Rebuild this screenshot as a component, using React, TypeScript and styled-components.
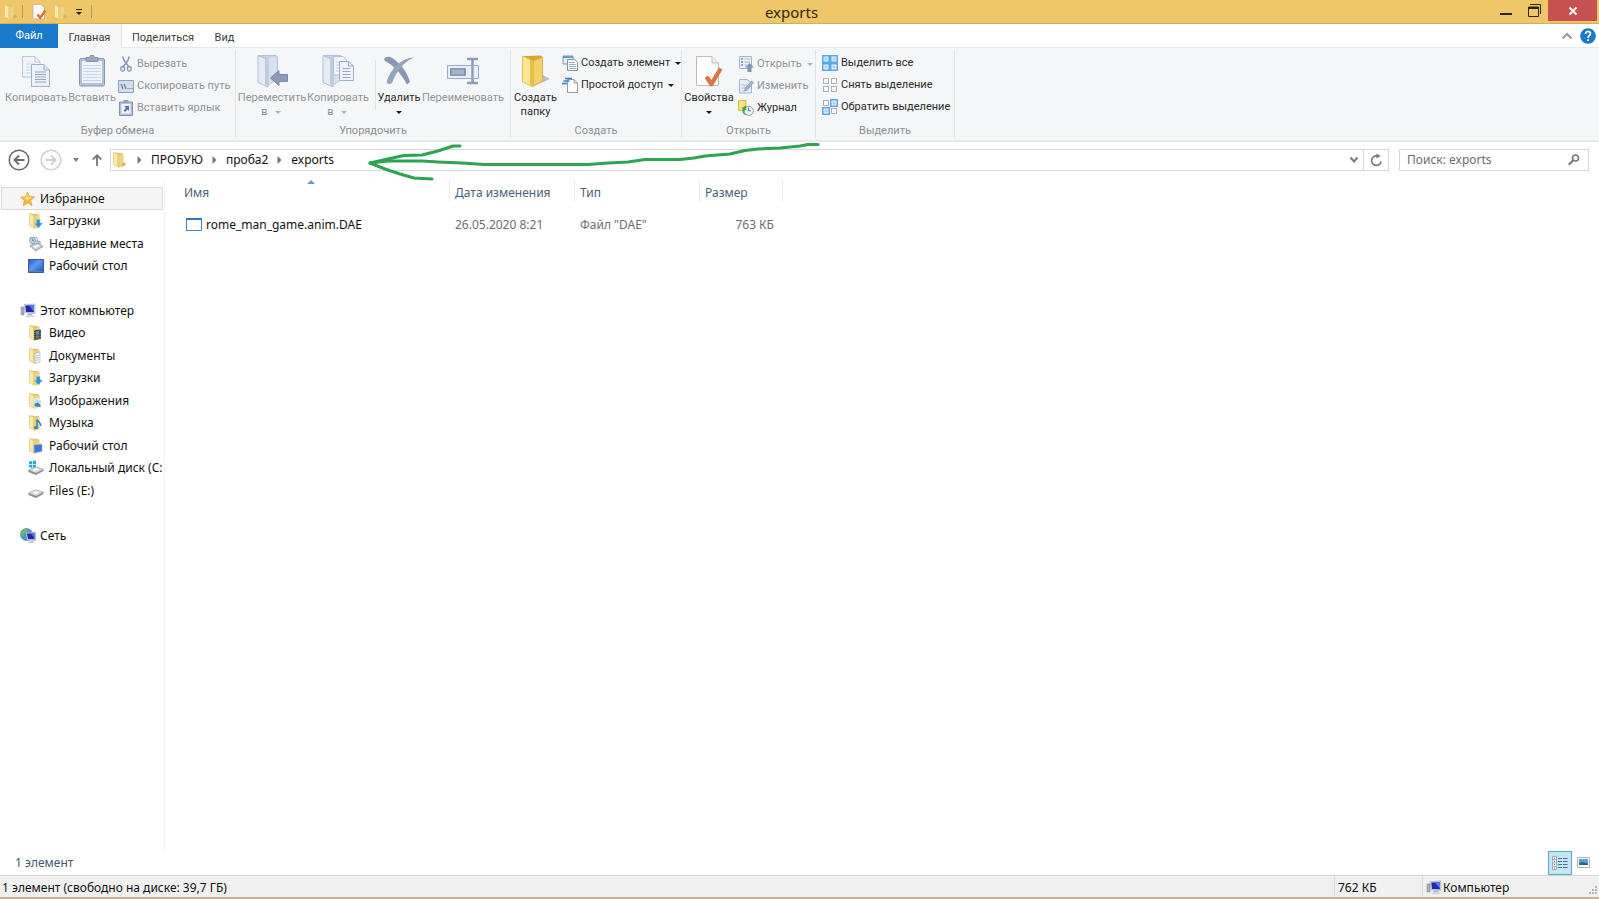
import React from "react";
import styled, { createGlobalStyle } from "styled-components";

const GlobalStyle = createGlobalStyle`
  *, *::before, *::after { box-sizing: border-box; }
  html, body { margin: 0; padding: 0; }
  body {
    background: #fff;
    color: #111;
    font: 12px/14px "Noto Sans", "Open Sans", sans-serif;
    overflow: hidden;
  }
  button, input { font: inherit; color: inherit; margin: 0; }
  svg { display: block; flex: none; overflow: visible; }
`;

const Window = styled.div`
  position: relative;
  display: flex;
  flex-direction: column;
  height: 100vh;
  min-width: 1000px;
`;

const PlainButton = styled.button`
  display: flex;
  align-items: center;
  padding: 0;
  border: 0;
  background: none;
  white-space: nowrap;
`;

/* ---------- title bar ---------- */

const TitleBar = styled.header`
  display: grid;
  grid-template-columns: 1fr auto 1fr;
  height: 24px;
  padding-right: 2px;
  background: #efc768;
  border-bottom: 1px solid #cfae62;
`;

const QuickAccess = styled.div`
  display: flex;
  align-items: center;
`;

const QuickButton = styled(PlainButton)<{ $width: number }>`
  justify-content: center;
  width: ${(p) => p.$width}px;
  height: 20px;
`;

const QuickDivider = styled.span`
  width: 1px;
  height: 13px;
  background: #b39a62;
`;

const Title = styled.h1`
  margin: 0;
  padding: 2px 14px 0 0;
  font-size: 15px;
  line-height: 20px;
  font-weight: 400;
  color: #33270c;
`;

const WindowButtons = styled.div`
  display: flex;
  justify-content: flex-end;
  align-items: flex-start;
`;

const CaptionButton = styled(PlainButton)<{ $close?: boolean }>`
  justify-content: center;
  width: ${(p) => (p.$close ? 49 : 28)}px;
  height: 21px;
  background: ${(p) => (p.$close ? "#c75050" : "none")};
`;

/* ---------- tabs ---------- */

const TabBar = styled.nav`
  display: flex;
  height: 24px;
  border-bottom: 1px solid #e6e7e8;
`;

const Tab = styled(PlainButton)<{ $kind?: "file" | "active"; $width: number }>`
  justify-content: center;
  width: ${(p) => p.$width}px;
  height: 24px;
  font-family: Roboto, "Noto Sans", sans-serif;
  font-size: 11px;
  color: ${(p) => (p.$kind === "file" ? "#fff" : "#3b3b3b")};
  background: ${(p) =>
    p.$kind === "file" ? "#1979ca" : p.$kind === "active" ? "#f5f6f7" : "none"};
  border-right: ${(p) => (p.$kind === "active" ? "1px solid #e2e3e4" : "0")};
  padding-top: ${(p) => (p.$kind === "file" ? 0 : 4)}px;
`;

const TabTools = styled.div`
  display: flex;
  align-items: center;
  gap: 8px;
  margin-left: auto;
  padding-right: 3px;
`;

/* ---------- ribbon ---------- */

const Ribbon = styled.section`
  display: flex;
  height: 94px;
  font-family: Roboto, "Noto Sans", sans-serif;
  background: #f5f6f7;
  border-bottom: 2px solid #e8e8e9;
`;

const Group = styled.div<{ $width: number }>`
  display: flex;
  flex-direction: column;
  flex: none;
  width: ${(p) => p.$width}px;
  margin: 2px 0;
  border-right: 1px solid #e3e4e6;
`;

const GroupBody = styled.div`
  display: flex;
  flex: 1;
  padding: 2px 2px 0;
`;

const GroupLabel = styled.div`
  height: 14px;
  font-size: 11px;
  line-height: 14px;
  text-align: center;
  color: #8b8f94;
`;

const BigButton = styled(PlainButton)<{ $width: number; $dim?: boolean }>`
  flex: none;
  flex-direction: column;
  width: ${(p) => p.$width}px;
  height: 67px;
  font-size: 11px;
  color: ${(p) => (p.$dim ? "#919498" : "#2b2b2b")};
`;

const BigIcon = styled.span`
  display: flex;
  align-items: center;
  justify-content: center;
  height: 39px;
  padding-bottom: 2px;
`;

const LabelLine = styled.span`
  display: flex;
  align-items: center;
  gap: 5px;
  height: 14px;
`;

const InnerDivider = styled.span`
  width: 1px;
  height: 50px;
  margin: 8px 3px 0 5px;
  background: #e3e4e6;
`;

const SmallColumn = styled.div<{ $top: number; $left: number }>`
  display: flex;
  flex-direction: column;
  align-items: flex-start;
  padding: ${(p) => p.$top}px 0 0 ${(p) => p.$left}px;
`;

const SmallButton = styled(PlainButton)<{ $dim?: boolean }>`
  gap: 3px;
  height: 22px;
  font-size: 11px;
  color: ${(p) => (p.$dim ? "#919498" : "#2b2b2b")};
`;

const SmallIcon = styled.span`
  display: flex;
  justify-content: center;
  width: 16px;
`;

const Caret = styled.span<{ $dim?: boolean }>`
  width: 0;
  height: 0;
  margin: 0 2px;
  border: 3px solid transparent;
  border-top: 3px solid ${(p) => (p.$dim ? "#b0b3b6" : "#1c1c1c")};
  border-bottom: 0;
`;

/* ---------- address row ---------- */

const AddressRow = styled.div`
  display: flex;
  align-items: center;
  height: 37px;
  padding: 0 10px 1px 8px;
`;

const NavButton = styled(PlainButton)<{ $width: number }>`
  justify-content: center;
  width: ${(p) => p.$width}px;
`;

const AddressBox = styled.div`
  display: flex;
  align-items: center;
  flex: 1;
  height: 22px;
  border: 1px solid #d9d9d9;
`;

const Crumbs = styled.nav`
  display: flex;
  align-items: center;
  flex: 1;
  gap: 9px;
  padding-left: 1px;
`;

const RefreshButton = styled(PlainButton)`
  justify-content: center;
  width: 25px;
  height: 20px;
  border-left: 1px solid #d9d9d9;
`;

const SearchBox = styled.label`
  display: flex;
  align-items: center;
  width: 190px;
  height: 22px;
  margin-left: 10px;
  padding: 0 8px 0 7px;
  border: 1px solid #d9d9d9;
`;

const SearchInput = styled.input`
  flex: 1;
  min-width: 0;
  padding: 0;
  border: 0;
  outline: 0;
  background: none;
  &::placeholder { color: #6d6d6d; opacity: 1; }
`;

/* ---------- body ---------- */

const Body = styled.main`
  display: flex;
  flex: 1;
  min-height: 0;
`;

const Sidebar = styled.aside`
  display: flex;
  flex-direction: column;
  gap: 22px;
  width: 165px;
  padding: 8px 1px 0 1px;
  border-right: 1px solid #f3f3f3;
`;

const TreeGroup = styled.ul`
  margin: 0;
  padding: 0;
  list-style: none;
`;

const TreeItem = styled.li`
  display: flex;
  height: 22px;
  &:nth-child(odd) { height: 23px; }
`;

const TreeButton = styled(PlainButton)<{ $child?: boolean; $active?: boolean }>`
  flex: 1;
  gap: ${(p) => (p.$child ? 5 : 4)}px;
  min-width: 0;
  overflow: hidden;
  padding-left: ${(p) => (p.$child ? 26 : 18)}px;
  border: 1px solid ${(p) => (p.$active ? "#dadada" : "transparent")};
  border-right-width: ${(p) => (p.$active ? 1 : 0)}px;
  background: ${(p) => (p.$active ? "#f5f5f5" : "none")};
`;

const Files = styled.section`
  flex: 1;
  padding-top: 1px;
`;

const FileTable = styled.table`
  table-layout: fixed;
  width: 618px;
  border-collapse: separate;
  border-spacing: 0;
`;

const HeadCell = styled.th<{ $width: number }>`
  position: relative;
  width: ${(p) => p.$width}px;
  height: 22px;
  padding: 4px 0 0 ${(p) => (p.$width > 200 ? 19 : 5)}px;
  text-align: left;
  font-weight: 400;
  color: #4c607a;
  border-right: 1px solid #ebebeb;
`;

const SortMark = styled.span`
  position: absolute;
  top: 0;
  left: 50%;
  border: 4px solid transparent;
  border-bottom-color: #6a9cb8;
  border-top: 0;
`;

const Cell = styled.td<{ $end?: boolean }>`
  height: 46px;
  padding: 0 ${(p) => (p.$end ? 9 : 0)}px 0 5px;
  color: #6d6d6d;
  text-align: ${(p) => (p.$end ? "right" : "left")};
`;

const NameCell = styled(Cell)`
  padding-left: 21px;
  color: #111;
`;

const FileName = styled.span`
  display: flex;
  align-items: center;
  gap: 4px;
`;

/* ---------- bottom bars ---------- */

const DetailsBar = styled.div`
  display: flex;
  align-items: center;
  height: 24px;
  padding: 0 4px 0 15px;
  color: #44566e;
`;

const ViewButtons = styled.div`
  display: flex;
  margin-left: auto;
`;

const ViewButton = styled(PlainButton)<{ $active?: boolean }>`
  justify-content: center;
  width: 24px;
  height: 24px;
  margin-left: ${(p) => (p.$active ? 0 : -1)}px;
  border: 1px solid ${(p) => (p.$active ? "#5ba7cc" : "transparent")};
  background: ${(p) => (p.$active ? "#c4e7f7" : "none")};
`;

const StatusBar = styled.footer`
  display: flex;
  height: 24px;
  background: #f0f0f0;
  border-top: 1px solid #d7d7d7;
  border-bottom: 2px solid #c3b694;
`;

const StatusPane = styled.div<{ $width?: number }>`
  display: flex;
  align-items: center;
  gap: 1px;
  flex: ${(p) => (p.$width ? "none" : "1")};
  width: ${(p) => (p.$width ? p.$width + "px" : "auto")};
  padding-left: ${(p) => (p.$width ? 3 : 2)}px;
  padding-top: 3px;
  border-left: ${(p) => (p.$width ? "1px solid #dadada" : "0")};
`;

const Grip = styled.span`
  margin: 4px 1px 0 auto;
`;

const Annotation = styled.svg`
  position: absolute;
  left: 365px;
  top: 140px;
  pointer-events: none;
`;

/* ---------- icons ---------- */

type FolderKind = "plain" | "download" | "video" | "docs" | "image" | "music" | "desktop";

const FolderIcon = ({ kind = "plain" }: { kind?: FolderKind }) => (
  <svg width="16" height="16" viewBox="0 0 16 16">
    <path d="m2 .500 8 .5 1.500 1V14l-5 1.500z" fill="#e3c46e" />
    <path d="M7 3.500 11 2v11.500l-4 2z" fill="#efd583" />
    <path d="m1.500.500 5.500 2.500v12.500L1.500 13z" fill="#faeaae" stroke="#e2c56c" strokeWidth=".7" />
    <path d="m5 2.500 2 .8v12L5 14.300z" fill="#ecd07c" />
    {kind === "plain" && <path d="m10.500 11 2.500-.5 1 2.500-4 1.800z" fill="#cbb57a" />}
    {kind === "download" && (
      <path d="M8.500 6.500H12V10h2.500L10.500 15 6.500 10.500h2z" fill="#2e93cf" stroke="#8cc6e6" strokeWidth=".6" />
    )}
    {kind === "video" && (
      <>
        <path d="m6 5 7-.5v9.500l-7 1z" fill="#3d4a4c" />
        <path d="M8 6h3v3.500H8z" fill="#5f92a8" />
        <path d="M8 10.300h3v3H8z" fill="#68805a" />
        <path d="M6.800 5v9.500M12.200 5v9" stroke="#c7cdd0" strokeWidth=".6" strokeDasharray="1 1" />
      </>
    )}
    {kind === "docs" && (
      <>
        <path d="M7 5.500 12 4v10l-5 1.500z" fill="#f3f5f8" stroke="#a9b0ba" strokeWidth=".6" />
        <path d="m8.300 8 2.500-.8m-2.500 3 2.500-.8m-2.500 3 2.500-.8" stroke="#98a2b3" strokeWidth=".7" />
      </>
    )}
    {kind === "image" && (
      <>
        <path d="m6 5.500 7 1v8l-7-1z" fill="#b9def0" stroke="#f2f6f8" strokeWidth=".8" />
        <path d="m6.500 11 3-1.500 3 2.500v2l-6-.8z" fill="#47809b" />
      </>
    )}
    {kind === "music" && (
      <>
        <path d="M9 12.500V4.500c1 2.500 4.500 3 3.500 6.500" fill="none" stroke="#2d86c2" strokeWidth="1.600" />
        <ellipse cx="8" cy="12.600" rx="2.200" ry="1.700" fill="#2d86c2" />
      </>
    )}
    {kind === "desktop" && (
      <path d="m6 7 8-1v7.500L6 15z" fill="#3c79d6" stroke="#9fc0ef" strokeWidth=".6" />
    )}
  </svg>
);

const StarIcon = () => (
  <svg width="16" height="16" viewBox="0 0 16 16">
    <path d="m7.500 1 2 4.600 5 .3-3.900 3.400 1.400 5.200-4.400-2.700-4.500 2.900 1.300-5.300L.7 6.200l4.900-.5z" fill="#fbb73c" stroke="#e99a2c" strokeWidth=".7" />
    <path d="m7.500 2.500 1.300 3.800 3.700.2-4.900 2.800-4.400-2.500 3-.5z" fill="#fedd85" />
  </svg>
);

const RecentIcon = () => (
  <svg width="16" height="16" viewBox="0 0 16 16">
    <path d="M2 1.500h7l1.500 6H4z" fill="#dfe9f2" stroke="#8aa5bb" strokeWidth=".7" />
    <circle cx="4.500" cy="4.500" r="3" fill="#bcd8ea" stroke="#6f95b1" strokeWidth=".8" />
    <path d="M4.500 3v1.700H6" fill="none" stroke="#3e6484" strokeWidth=".7" />
    <path d="m2 9.500 8-2.500 5 3.500-7.500 4.500z" fill="#c3cbd2" stroke="#7c8a96" strokeWidth=".7" />
    <path d="m5 10 5-1.500 2 1.500-5 2.300z" fill="#f4f7f9" />
    <path d="m8 5 4 .5v3" fill="none" stroke="#8296a6" />
  </svg>
);

const DesktopIcon = () => (
  <svg width="16" height="14" viewBox="0 0 16 14">
    <defs>
      <linearGradient id="screen" x1="0" y1="0" x2="1" y2="1">
        <stop offset="0" stopColor="#2a58bd" />
        <stop offset=".45" stopColor="#5b9af0" />
        <stop offset="1" stopColor="#1e4db6" />
      </linearGradient>
    </defs>
    <path d="M.5.500h15v13H.5z" fill="url(#screen)" stroke="#385c9f" />
    <path d="M1 12h14v1H1z" fill="#5b7dae" />
  </svg>
);

const ComputerIcon = () => (
  <svg width="16" height="16" viewBox="0 0 16 16">
    <path d="M1 4h3v8H1z" fill="#a5adb7" stroke="#7c8490" strokeWidth=".5" />
    <path d="m4 1.500 11-.5v9.500l-10-.5z" fill="#d5dce5" stroke="#9aa5b4" strokeWidth=".6" />
    <path d="m5.300 2.500 8.700-.3v7l-8-.3z" fill="#1c28b4" />
    <path d="m9 2.400 5-.2v6.500z" fill="#5a78e4" />
    <path d="m8 10.500 4 .2.500 1.800H7z" fill="#aeb6c1" />
    <path d="m5 13 9-.5 1.500 1.300-9 .8z" fill="#d3d7dc" />
  </svg>
);

const NetworkIcon = () => (
  <svg width="16" height="16" viewBox="0 0 16 16">
    <circle cx="6.500" cy="6.500" r="6" fill="#4c94cc" stroke="#3f76a2" strokeWidth=".6" />
    <path d="M2 3c2-2 4-2.500 6-2L7 4 4 5.500 3.500 9 1 7.500z" fill="#6dba6d" />
    <path d="m6 4.500 9.500-.3v8.300L7 12z" fill="#d5dce5" stroke="#8f9bac" strokeWidth=".6" />
    <path d="m7 5.500 7.500-.2v6L8 11z" fill="#1c28b4" />
    <path d="m11 5.400 3.500-.1v5.200z" fill="#5a78e4" />
    <path d="m8 13.500 5-.3 1.500 1.600-6 .4z" fill="#bfc5cd" />
  </svg>
);

const DriveIcon = ({ system }: { system?: boolean }) => (
  <svg width="16" height="16" viewBox="0 0 16 16">
    {system && (
      <path d="m1 1.500 3-.5v3H1zm3.700-.6L8 .4V4H4.700zM1 4.700h3v3l-3-.4zm3.700 0H8v3.600l-3.300-.5z" fill="#1fb0e0" />
    )}
    <path d="M.5 10 8 6.800l7.500 2.400-7.500 4z" fill="#dcdfe1" stroke="#94989c" strokeWidth=".6" />
    <path d="M.5 10 8 13.200l7.500-4v1.800L8 15 .5 12z" fill="#888e93" />
    <path d="m4.500 9.700 3.500-1.400 3 1-3.300 1.700z" fill="#fafafa" />
    {system && <path d="m2 12 2.500 1" stroke="#46c36b" />}
  </svg>
);

const PropertiesSmallIcon = () => (
  <svg width="15" height="16" viewBox="0 0 15 16">
    <path d="M1 .500h8l3.500 3.500v11H1z" fill="#fcf7ef" stroke="#c2b69e" strokeWidth=".8" />
    <path d="m5.500 10.500 2.700 3.300L13.500 6.500" fill="none" stroke="#dc6a3c" strokeWidth="2.300" />
  </svg>
);

const CopyIcon = () => (
  <svg width="30" height="34" viewBox="0 0 30 34">
    <path d="M1.500 2.500H14l5 5V23H1.500z" fill="#f1f5fa" stroke="#b9c8dc" />
    <path d="M14 2.500V8h5" fill="none" stroke="#b9c8dc" />
    <path d="M5 10h9m-9 3h9m-9 3h9m-9 3h9" stroke="#c8d4e4" />
    <path d="M10.500 10.500H23l5.500 5.500v16.500h-18z" fill="#edf2f9" stroke="#9fb1ca" />
    <path d="M23 10.500V16h5.500" fill="#dbe4f0" stroke="#9fb1ca" />
    <path d="M14 18h11M14 20.500h11M14 23h11M14 25.500h11M14 28h11" stroke="#91a5c1" />
  </svg>
);

const PasteIcon = () => (
  <svg width="28" height="34" viewBox="0 0 28 34">
    <rect x="1.500" y="4.500" width="25" height="27.500" rx="1.500" fill="#b4c2d6" stroke="#8496b3" />
    <path d="M4 7h20v22H4z" fill="#f0f4f9" />
    <path d="M5 11.500h18M5 14.500h18M5 17.500h18M5 20.500h18M5 23.500h18M5 26.500h18" stroke="#cad5e3" />
    <path d="M8 3.500h3.500L12.500 1.500h3l1 2H20v4H8z" fill="#9aaac3" stroke="#8395b1" />
  </svg>
);

const PaleFolder = () => (
  <>
    <path d="M3 1.500h17l1.500 1.500v22L12 31z" fill="#c8d4e6" stroke="#b4c2d8" />
    <path d="M12 4.500 21 3v21.500L12 31z" fill="#d6e0ee" />
    <path d="M2 1.500 12 5.500v27.500L2 28.500z" fill="#e4ebf5" stroke="#b0bfd6" />
    <path d="m9 5 3 1v26l-3-1.500z" fill="#bfcce0" />
  </>
);

const MoveToIcon = () => (
  <svg width="32" height="34" viewBox="0 0 32 34">
    <PaleFolder />
    <path d="m14.500 24 8.500-7.500v4h8.500v7H23v4z" fill="#8c9cb8" stroke="#7788a6" />
  </svg>
);

const CopyToIcon = () => (
  <svg width="34" height="34" viewBox="0 0 34 34">
    <PaleFolder />
    <path d="M12.500 2.500H22l3.500 3.500v15h-13z" fill="#f1f5fa" stroke="#b0c0d8" />
    <path d="M15 8h8m-8 3h8m-8 3h8m-8 3h8" stroke="#c3d0e2" />
    <path d="M18.500 7.500h9L32.500 12v14.500h-14z" fill="#eff3f9" stroke="#9fb1ca" />
    <path d="M27.500 7.500V12h5M21.500 14.500h8m-8 3h8m-8 3h8m-8 3h8" fill="none" stroke="#95a8c4" />
  </svg>
);

const DeleteIcon = () => (
  <svg width="32" height="30" viewBox="0 0 32 30">
    <path d="M1 3C3 0 7 0 10 2.500c8 6 14 13 17 23.500l-3 2.500C19 19 12 10 2 5z" fill="#8798b7" />
    <path d="M31 1.500c-8 3-17 12-22 25.500-2 2-6 1-5-2C8 12 19 2 31 1.500z" fill="#94a3be" />
  </svg>
);

const RenameIcon = () => (
  <svg width="34" height="30" viewBox="0 0 34 30">
    <path d="M1.500 9.500h31v13h-31z" fill="#e9eff7" stroke="#98abc7" />
    <path d="M4 12h16v8H4z" fill="#8598b8" />
    <path d="M6 13.500h12v5H6z" fill="#a3b3cc" />
    <path d="M26.500 4v22M21 3h4.500l1 1 1-1H32M21 27h4.500l1-1 1 1H32" fill="none" stroke="#8f9fbb" strokeWidth="2.500" />
  </svg>
);

const NewFolderIcon = () => (
  <svg width="30" height="36" viewBox="0 0 30 36">
    <path d="m13 33 16-7-7-4-8 6z" fill="#a9a69d" opacity=".7" />
    <path d="m3 3 17-.5 1.500 1.500v23L12 30z" fill="#d4a62e" />
    <path d="M12 8 21.500 4v24L12 33z" fill="#f2d06a" stroke="#d3a93c" strokeWidth=".7" />
    <path d="m1.500 3 10.500 5v26L1.500 29z" fill="#f9e691" stroke="#dcb850" strokeWidth=".8" />
    <path d="m9 7 3 1.200v25L9 32z" fill="#e6bf4c" />
  </svg>
);

const PropertiesIcon = () => (
  <svg width="28" height="34" viewBox="0 0 28 34">
    <path d="M1.500 2.500H17L23.500 9v22.500h-22z" fill="#fdfdfd" stroke="#b9bbbe" />
    <path d="M17 2.500V9h6.500" fill="#eceded" stroke="#b9bbbe" />
    <path d="m10 24 3-2 3.500 4.500L24 14l3 1.500L17.500 32h-2z" fill="#e17340" stroke="#cb6032" strokeWidth=".6" />
  </svg>
);

const CutIcon = () => (
  <svg width="12" height="16" viewBox="0 0 12 16" fill="none">
    <path d="M3 .5c-.5 4 3.500 6 5.500 10M9 .5c.5 4-3.500 6-5.500 10" stroke="#8497b5" strokeWidth="1.500" />
    <ellipse cx="2.700" cy="12.800" rx="1.900" ry="2.300" stroke="#8497b5" strokeWidth="1.300" />
    <ellipse cx="9.300" cy="12.800" rx="1.900" ry="2.300" stroke="#8497b5" strokeWidth="1.300" />
  </svg>
);

const CopyPathIcon = () => (
  <svg width="16" height="13" viewBox="0 0 16 13">
    <path d="M.5.500h15v12H.5z" fill="#d3deec" stroke="#8b9fbf" />
    <path d="m3 4 2 5m1-5 2 5" stroke="#5f7598" strokeWidth="1.100" />
    <path d="M9.500 8.500h1m1 0h1m1 0h1" stroke="#5f7598" />
  </svg>
);

const PasteLinkIcon = () => (
  <svg width="14" height="16" viewBox="0 0 14 16">
    <path d="M.5 2h13v13.500H.5z" fill="#b3c2d8" stroke="#7d91b2" />
    <path d="M2.500 4h9v9.500h-9z" fill="#f3f6fa" />
    <path d="M4.500 0h5v3h-5z" fill="#8ea1bf" />
    <path d="M5 6h5v5L8.500 9.500 6 12 4.500 10.500 7 8z" fill="#5b7297" />
  </svg>
);

const NewItemIcon = () => (
  <svg width="16" height="16" viewBox="0 0 16 16">
    <path d="M1 1h10v8H1z" fill="#dfeef7" stroke="#6b9db9" />
    <path d="M1 1h10v2H1z" fill="#5ba0c5" />
    <path d="M5.500 4.500h7L15.500 7v8.500h-10z" fill="#fafafa" stroke="#8d9398" />
    <path d="M7 7.500h6m-6 2h7m-7 2h7m-7 2h7" stroke="#9cb4c2" />
  </svg>
);

const EasyAccessIcon = () => (
  <svg width="16" height="16" viewBox="0 0 16 16">
    <path d="M5.500 2.500h6.500L15.500 6v9.500h-10z" fill="#fcfcfc" stroke="#989da1" />
    <path d="M12 2.500V6h3.500" fill="none" stroke="#989da1" />
    <path d="M3 1.500h7M1.500 4h6M0 6.500h5" stroke="#3182b8" strokeWidth="1.500" />
  </svg>
);

const OpenIcon = () => (
  <svg width="15" height="16" viewBox="0 0 15 16">
    <path d="M.5.500h12v12H.5z" fill="#e9eff7" stroke="#a5b5cd" />
    <path d="M2 3h2M2 6h2M2 9h2" stroke="#7e93b5" strokeWidth="1.600" />
    <path d="M5.500 3H11M5.500 6H11M5.500 9H8" stroke="#a6b6ce" />
    <path d="m10.500 7 4.500 4.500h-2.500V16h-4v-4.500H6z" fill="#8395b4" />
  </svg>
);

const EditIcon = () => (
  <svg width="15" height="16" viewBox="0 0 15 16">
    <path d="M.5 1.500H8L12.500 5v10H.5z" fill="#e6edf6" stroke="#a5b5cd" />
    <path d="M2.500 7h6m-6 3h4m-4 3h3" stroke="#b6c4d8" />
    <path d="m5.500 13 .7-2.800L12.500 3l2 1.700-6.300 7.300z" fill="#a3b2ca" stroke="#8295b3" strokeWidth=".7" />
  </svg>
);

const HistoryIcon = () => (
  <svg width="16" height="16" viewBox="0 0 16 16">
    <path d="M.5.500h7.500v10h-7.500z" fill="#f7e283" stroke="#ddbb3f" />
    <circle cx="10.800" cy="10.800" r="4.600" fill="#eaf1f1" stroke="#8ea1a1" />
    <path d="M10.500 7.500v3.300H13" fill="none" stroke="#697d80" />
    <path d="M9.500 15c-3-.5-4-3-3-5.500l2 1L8 5.500 3.500 8l1.300.7C3.500 12 5.500 15.500 9.500 15z" fill="#3daa45" />
  </svg>
);

const SelectTiles = ({ filled }: { filled: boolean[] }) => (
  <svg width="16" height="16" viewBox="0 0 16 16">
    {filled.map((on, i) => {
      const x = (i % 2) * 8;
      const y = Math.floor(i / 2) * 8;
      return (
        <g key={i}>
          {on && <path d={`M${x} ${y}h8v8h-8z`} fill="#5ba7e8" />}
          <rect
            x={x + (on ? 2 : 1.500)}
            y={y + (on ? 2 : 1.500)}
            width={on ? 4 : 5}
            height={on ? 4 : 5}
            fill={on ? "#a9d2f5" : "#fbfbfb"}
            stroke={on ? "#e6f4ff" : "#b0b2b5"}
          />
        </g>
      );
    })}
  </svg>
);

const BackIcon = ({ forward }: { forward?: boolean }) => {
  const c = forward ? "#cfcfcf" : "#6b6b6b";
  return (
    <svg width="22" height="22" viewBox="0 0 22 22" fill="none" stroke={c}>
      <circle cx="11" cy="11" r="9.800" strokeWidth="1.500" />
      {forward ? (
        <path d="M5.500 11H15m-4-4.500 4.500 4.500-4.500 4.500" strokeWidth="2" />
      ) : (
        <path d="M16.500 11H7m4-4.500L6.500 11l4.500 4.500" strokeWidth="2" />
      )}
    </svg>
  );
};

const Chevron = ({ up }: { up?: boolean }) => (
  <svg width="10" height="8" viewBox="0 0 10 8" fill="none" stroke={up ? "#9a9a9a" : "#7a7a7a"} strokeWidth="2">
    <path d={up ? "m.5 6.500 4.500-4.500 4.500 4.500" : "m1.500 1.500 3.500 4 3.500-4"} />
  </svg>
);

const CrumbArrow = () => (
  <svg width="5" height="8" viewBox="0 0 5 8">
    <path d="M.5 0v8l4-4z" fill="#747474" />
  </svg>
);

/* ---------- data ---------- */

type Entry = { label: string; icon: React.ReactNode };

const tree: Entry[][] = [
  [
    { label: "Избранное", icon: <StarIcon /> },
    { label: "Загрузки", icon: <FolderIcon kind="download" /> },
    { label: "Недавние места", icon: <RecentIcon /> },
    { label: "Рабочий стол", icon: <DesktopIcon /> },
  ],
  [
    { label: "Этот компьютер", icon: <ComputerIcon /> },
    { label: "Видео", icon: <FolderIcon kind="video" /> },
    { label: "Документы", icon: <FolderIcon kind="docs" /> },
    { label: "Загрузки", icon: <FolderIcon kind="download" /> },
    { label: "Изображения", icon: <FolderIcon kind="image" /> },
    { label: "Музыка", icon: <FolderIcon kind="music" /> },
    { label: "Рабочий стол", icon: <FolderIcon kind="desktop" /> },
    { label: "Локальный диск (C:)", icon: <DriveIcon system /> },
    { label: "Files (E:)", icon: <DriveIcon /> },
  ],
  [{ label: "Сеть", icon: <NetworkIcon /> }],
];

type BigProps = {
  icon: React.ReactNode;
  label: string;
  second?: string;
  caret?: boolean;
  dim?: boolean;
  width: number;
};

const Big = ({ icon, label, second, caret, dim, width }: BigProps) => (
  <BigButton type="button" $width={width} $dim={dim}>
    <BigIcon>{icon}</BigIcon>
    <LabelLine>{label}</LabelLine>
    {(second || caret) && (
      <LabelLine>
        {second}
        {caret && <Caret $dim={dim} />}
      </LabelLine>
    )}
  </BigButton>
);

type SmallProps = { icon: React.ReactNode; label: string; caret?: boolean; dim?: boolean };

const Small = ({ icon, label, caret, dim }: SmallProps) => (
  <SmallButton type="button" $dim={dim}>
    <SmallIcon>{icon}</SmallIcon>
    {label}
    {caret && <Caret $dim={dim} />}
  </SmallButton>
);

export default function App() {
  return (
    <>
      <GlobalStyle />
      <Window>
        <TitleBar>
          <QuickAccess>
            <QuickButton type="button" aria-label="Меню окна" $width={22}>
              <FolderIcon />
            </QuickButton>
            <QuickDivider />
            <QuickButton type="button" aria-label="Свойства" $width={32}>
              <PropertiesSmallIcon />
            </QuickButton>
            <QuickButton type="button" aria-label="Создать папку" $width={12}>
              <FolderIcon />
            </QuickButton>
            <QuickButton type="button" aria-label="Настройка панели" $width={24}>
              <svg width="6" height="6" viewBox="0 0 6 6">
                <path d="M0 .500h6" stroke="#222" />
                <path d="M0 3h6L3 6z" fill="#222" />
              </svg>
            </QuickButton>
            <QuickDivider />
          </QuickAccess>
          <Title>exports</Title>
          <WindowButtons>
            <CaptionButton type="button" aria-label="Свернуть">
              <svg width="12" height="12" viewBox="0 0 12 12">
                <path d="M0 9h12" stroke="#2b2413" strokeWidth="2" />
              </svg>
            </CaptionButton>
            <CaptionButton type="button" aria-label="Восстановить">
              <svg width="13" height="13" viewBox="0 0 13 13" fill="none" stroke="#2b2413">
                <path d="M.5 3h10v9.500H.5z" />
                <path d="M0 4h11" strokeWidth="2" />
                <path d="M2 .500h10.500V10" />
              </svg>
            </CaptionButton>
            <CaptionButton type="button" aria-label="Закрыть" $close>
              <svg width="8" height="8" viewBox="0 0 8 8">
                <path d="m.5.500 7 7m0-7-7 7" stroke="#fff" strokeWidth="2" />
              </svg>
            </CaptionButton>
          </WindowButtons>
        </TitleBar>

        <TabBar>
          <Tab type="button" $kind="file" $width={58}>Файл</Tab>
          <Tab type="button" $kind="active" $width={64}>Главная</Tab>
          <Tab type="button" $width={82}>Поделиться</Tab>
          <Tab type="button" $width={41}>Вид</Tab>
          <TabTools>
            <PlainButton type="button" aria-label="Свернуть ленту">
              <Chevron up />
            </PlainButton>
            <PlainButton type="button" aria-label="Справка">
              <svg width="16" height="16" viewBox="0 0 16 16">
                <circle cx="8" cy="8" r="7.800" fill="#1979ca" />
                <path d="M5.500 6c0-3.300 5-3.300 5-.4C10.500 7.500 8 7.700 8 10" fill="none" stroke="#fff" strokeWidth="1.700" />
                <path d="M7.100 11.300h1.800v1.800H7.100z" fill="#fff" />
              </svg>
            </PlainButton>
          </TabTools>
        </TabBar>

        <Ribbon>
          <Group $width={236}>
            <GroupBody>
              <Big icon={<CopyIcon />} label="Копировать" width={68} dim />
              <Big icon={<PasteIcon />} label="Вставить" width={44} dim />
              <SmallColumn $top={1} $left={4}>
                <Small icon={<CutIcon />} label="Вырезать" dim />
                <Small icon={<CopyPathIcon />} label="Скопировать путь" dim />
                <Small icon={<PasteLinkIcon />} label="Вставить ярлык" dim />
              </SmallColumn>
            </GroupBody>
            <GroupLabel>Буфер обмена</GroupLabel>
          </Group>
          <Group $width={275}>
            <GroupBody>
              <Big icon={<MoveToIcon />} label="Переместить" second="в" caret width={68} dim />
              <Big icon={<CopyToIcon />} label="Копировать" second="в" caret width={64} dim />
              <InnerDivider />
              <Big icon={<DeleteIcon />} label="Удалить" caret width={40} />
              <Big icon={<RenameIcon />} label="Переименовать" width={88} dim />
            </GroupBody>
            <GroupLabel>Упорядочить</GroupLabel>
          </Group>
          <Group $width={171}>
            <GroupBody>
              <Big icon={<NewFolderIcon />} label="Создать" second="папку" width={45} />
              <SmallColumn $top={0} $left={4}>
                <Small icon={<NewItemIcon />} label="Создать элемент" caret />
                <Small icon={<EasyAccessIcon />} label="Простой доступ" caret />
              </SmallColumn>
            </GroupBody>
            <GroupLabel>Создать</GroupLabel>
          </Group>
          <Group $width={134}>
            <GroupBody>
              <Big icon={<PropertiesIcon />} label="Свойства" caret width={50} />
              <SmallColumn $top={1} $left={4}>
                <Small icon={<OpenIcon />} label="Открыть" caret dim />
                <Small icon={<EditIcon />} label="Изменить" dim />
                <Small icon={<HistoryIcon />} label="Журнал" />
              </SmallColumn>
            </GroupBody>
            <GroupLabel>Открыть</GroupLabel>
          </Group>
          <Group $width={139}>
            <GroupBody>
              <SmallColumn $top={0} $left={4}>
                <Small icon={<SelectTiles filled={[true, true, true, true]} />} label="Выделить все" />
                <Small icon={<SelectTiles filled={[false, false, false, false]} />} label="Снять выделение" />
                <Small icon={<SelectTiles filled={[false, true, true, false]} />} label="Обратить выделение" />
              </SmallColumn>
            </GroupBody>
            <GroupLabel>Выделить</GroupLabel>
          </Group>
        </Ribbon>

        <AddressRow>
          <NavButton type="button" aria-label="Назад" $width={22}>
            <BackIcon />
          </NavButton>
          <NavButton type="button" aria-label="Вперед" $width={42}>
            <BackIcon forward />
          </NavButton>
          <NavButton type="button" aria-label="Последние расположения" $width={7}>
            <svg width="6" height="4" viewBox="0 0 6 4">
              <path d="M0 0h6L3 4z" fill="#7c7c7c" />
            </svg>
          </NavButton>
          <NavButton type="button" aria-label="Вверх" $width={31}>
            <svg width="10" height="12" viewBox="0 0 10 12" fill="none" stroke="#777" strokeWidth="1.800">
              <path d="M7 12V1.500M2.800 5.500 7 1.300l4.200 4.200" />
            </svg>
          </NavButton>
          <AddressBox>
            <Crumbs>
              <FolderIcon />
              <CrumbArrow />
              <PlainButton type="button">ПРОБУЮ</PlainButton>
              <CrumbArrow />
              <PlainButton type="button">проба2</PlainButton>
              <CrumbArrow />
              <PlainButton type="button">exports</PlainButton>
            </Crumbs>
            <NavButton type="button" aria-label="Предыдущие расположения" $width={18}>
              <Chevron />
            </NavButton>
            <RefreshButton type="button" aria-label="Обновить">
              <svg width="12" height="14" viewBox="0 0 12 14" fill="none" stroke="#777" strokeWidth="1.700">
                <path d="M7 3a4.700 4.700 0 1 0 4 5.500" />
                <path d="M6.500.500v5L10.500 3z" fill="#777" stroke="none" />
              </svg>
            </RefreshButton>
          </AddressBox>
          <SearchBox>
            <SearchInput type="text" aria-label="Поиск" placeholder="Поиск: exports" />
            <svg width="12" height="12" viewBox="0 0 12 12" fill="none" stroke="#777">
              <circle cx="7.500" cy="4" r="3" strokeWidth="1.600" />
              <path d="M5.500 6 .8 10.800" strokeWidth="2" />
            </svg>
          </SearchBox>
        </AddressRow>

        <Body>
          <Sidebar>
            {tree.map((group, g) => (
              <TreeGroup key={g}>
                {group.map((entry, i) => (
                  <TreeItem key={i}>
                    <TreeButton type="button" $child={i > 0} $active={g === 0 && i === 0}>
                      {entry.icon}
                      {entry.label}
                    </TreeButton>
                  </TreeItem>
                ))}
              </TreeGroup>
            ))}
          </Sidebar>
          <Files>
            <FileTable>
              <thead>
                <tr>
                  <HeadCell $width={285}>
                    Имя
                    <SortMark />
                  </HeadCell>
                  <HeadCell $width={125}>Дата изменения</HeadCell>
                  <HeadCell $width={125}>Тип</HeadCell>
                  <HeadCell $width={83}>Размер</HeadCell>
                </tr>
              </thead>
              <tbody>
                <tr>
                  <NameCell>
                    <FileName>
                      <svg width="16" height="14" viewBox="0 0 16 14">
                        <path d="M.5.500h15v12H.5z" fill="#fff" stroke="#4c7db4" />
                        <path d="M0 0h16v2H0z" fill="#2f78c3" />
                      </svg>
                      rome_man_game.anim.DAE
                    </FileName>
                  </NameCell>
                  <Cell>26.05.2020 8:21</Cell>
                  <Cell>Файл "DAE"</Cell>
                  <Cell $end>763 КБ</Cell>
                </tr>
              </tbody>
            </FileTable>
          </Files>
        </Body>

        <DetailsBar>
          1 элемент
          <ViewButtons>
            <ViewButton type="button" aria-label="Таблица" $active>
              <svg width="16" height="14" viewBox="0 0 16 14">
                <path d="M.5.500h4v13h-4z" fill="#fff" stroke="#9ba9b3" />
                <path d="M.5 3.700h4m-4 3.300h4m-4 3.300h4" stroke="#9ba9b3" />
                <path d="M2 2.200h1m-1 3.200h1m-1 3.300h1M2 12h1" stroke="#a44d4d" />
                <path d="M6 2.500h4m1 0h4.500M6 5.500h4m1 0h4.500M6 8.500h4m1 0h4.500m-9.500 3h4m1 0h4.500" stroke="#4c6f8e" />
              </svg>
            </ViewButton>
            <ViewButton type="button" aria-label="Крупные значки">
              <svg width="13" height="12" viewBox="0 0 13 12">
                <path d="M.5.500h12v10H.5z" fill="#fff" stroke="#a9b5bd" />
                <path d="M2 2h9v6H2z" fill="#52a5dc" />
                <path d="m2 6 3-1 6 1.500V8H2z" fill="#2b6b74" />
              </svg>
            </ViewButton>
          </ViewButtons>
        </DetailsBar>

        <StatusBar>
          <StatusPane>1 элемент (свободно на диске: 39,7 ГБ)</StatusPane>
          <StatusPane $width={88}>762 КБ</StatusPane>
          <StatusPane $width={177}>
            <ComputerIcon />
            Компьютер
            <Grip>
              <svg width="9" height="9" viewBox="0 0 9 9" fill="#b4b4b4">
                <path d="M6 0h2v2H6zM3 3h2v2H3zm3 0h2v2H6zM0 6h2v2H0zm3 0h2v2H3zm3 0h2v2H6z" />
              </svg>
            </Grip>
          </StatusPane>
        </StatusBar>

        <Annotation width="460" height="44" viewBox="365 140 460 44" fill="none" stroke="#2da450" strokeWidth="3" strokeLinecap="round" strokeLinejoin="round" aria-hidden="true">
          <path d="M460 146h-7l-15 5-16 4-18 .5-14 3-20 4.500 15 6 15 5 14 4 18 1" />
          <path d="M370 163 388 161 422 161 438 162 462 163 484 164.500H588L608 163 628 162 645 159.500H680L694 158 705 156 730 154 745 150.500 758 149 780 148 800 146 808 144.500H818" />
        </Annotation>
      </Window>
    </>
  );
}
